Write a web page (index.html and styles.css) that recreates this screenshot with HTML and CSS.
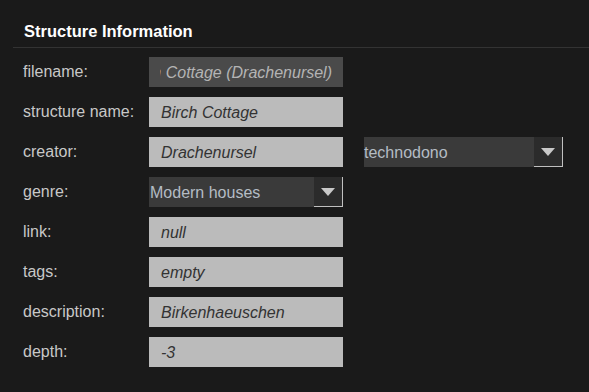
FILE: index.html
```html
<!DOCTYPE html>
<html lang="en">
<head>
    <meta charset="UTF-8">
    <title>Structure Information</title>
    <link rel="stylesheet" href="styles.css">
</head>
<body>
    <div class="panel">
        <h2 class="panel-title">Structure Information</h2>

        <div class="fields">
            <div class="row">
                <label>filename:</label>
                <div class="field dark">
                    <div class="clip"><span>Birch Cottage (Drachenursel)</span></div>
                </div>
            </div>

            <div class="row">
                <label>structure name:</label>
                <div class="field">Birch Cottage</div>
            </div>

            <div class="row">
                <label>creator:</label>
                <div class="field">Drachenursel</div>
                <div class="select wide">
                    <span class="select-value">technodono</span>
                    <span class="select-arrow"></span>
                </div>
            </div>

            <div class="row">
                <label>genre:</label>
                <div class="select">
                    <span class="select-value">Modern houses</span>
                    <span class="select-arrow"></span>
                </div>
            </div>

            <div class="row">
                <label>link:</label>
                <div class="field">null</div>
            </div>

            <div class="row">
                <label>tags:</label>
                <div class="field">empty</div>
            </div>

            <div class="row">
                <label>description:</label>
                <div class="field">Birkenhaeuschen</div>
            </div>

            <div class="row">
                <label>depth:</label>
                <div class="field">-3</div>
            </div>
        </div>
    </div>
</body>
</html>
```

FILE: styles.css
```css
body {
    margin: 0;
    background: #1a1a1a;
    font-family: 'Liberation Sans', Arial, sans-serif;
    font-size: 16px;
    color: #c8c8c8;
}
.panel {
    padding-top: 21px;
}
.panel-title {
    margin: 0 0 0 13px;
    padding: 0 0 6px 11px;
    font-size: 16.5px;
    font-weight: bold;
    line-height: 20px;
    color: #ffffff;
    border-bottom: 1px solid #333333;
}
.fields {
    display: flex;
    flex-direction: column;
    gap: 10px;
    padding: 9px 0 0 23px;
}
.row {
    display: flex;
    align-items: center;
    height: 30px;
}
.row label {
    width: 126px;
    flex-shrink: 0;
    line-height: 32px;
}
.field {
    width: 194px;
    height: 30px;
    line-height: 32px;
    box-sizing: border-box;
    padding: 0 11px 0 12px;
    background: #bbbbbb;
    color: #333333;
    font-style: italic;
    white-space: nowrap;
    overflow: hidden;
}
.field.dark {
    padding-left: 11px;
    background: #4a4a4a;
    color: #b4b4b4;
}
.clip {
    display: flex;
    justify-content: flex-end;
    overflow: hidden;
}
.select {
    display: flex;
    width: 194px;
    height: 30px;
    background: #3a3a3a;
    color: #b4bcc4;
}
.select.wide {
    width: 199px;
    margin-left: 21px;
}
.select-value {
    flex: 1;
    padding-left: 1px;
    line-height: 32px;
    white-space: nowrap;
}
.select.wide .select-value {
    padding-left: 0;
}
.select-arrow {
    display: flex;
    align-items: center;
    justify-content: center;
    width: 28px;
    height: 29px;
    background: #2b2b2b;
    border-right: 1px solid #c0c0c0;
    border-bottom: 1px solid #c0c0c0;
}
.select-arrow::after {
    content: "";
    border-left: 7.5px solid transparent;
    border-right: 7.5px solid transparent;
    border-top: 8px solid #c8c8c8;
}
```
